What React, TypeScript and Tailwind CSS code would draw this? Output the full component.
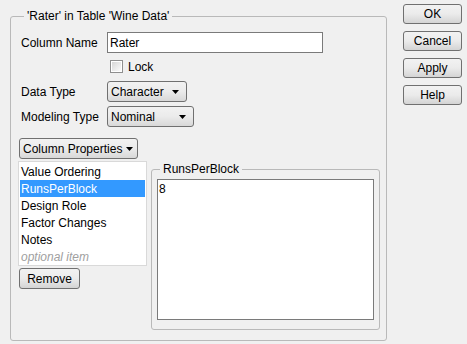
import React from "react";

const font = { fontFamily: '"Liberation Sans", Arial, sans-serif' };

function Caret() {
  return (
    <svg width="7" height="4" viewBox="0 0 7 4" className="shrink-0">
      <path d="M0 0 H7 L3.5 4 Z" fill="#000" />
    </svg>
  );
}

function WinButton({ label, className }: { label: string; className: string }) {
  return (
    <button
      className={
        "flex items-center justify-center whitespace-nowrap rounded-[3px] border border-[#707070] bg-linear-to-b from-[#f2f2f2] via-[#ebebeb] to-[#d4d4d4] text-[12px] leading-none text-black " +
        className
      }
    >
      {label}
    </button>
  );
}

function Dropdown({ label, width }: { label: string; width: string }) {
  return (
    <div
      className={
        "flex h-[21px] items-center justify-between whitespace-nowrap rounded-[3px] border border-[#707070] bg-linear-to-b from-[#f2f2f2] via-[#ebebeb] to-[#d8d8d8] pl-[3px] pr-[7px] text-[12px] text-black " +
        width
      }
    >
      <span>{label}</span>
      <Caret />
    </div>
  );
}

export default function App() {
  const items = ["Value Ordering", "RunsPerBlock", "Design Role", "Factor Changes", "Notes"];

  return (
    <div className="flex h-[344px] w-[467px] bg-[#f0f0f0] text-[12px] text-black" style={font}>
      <fieldset className="ml-[10px] mt-[8px] h-[333px] w-[377px] rounded-[3px] border border-[#b9b9b9] pl-[7px] pt-[8px]">
        <legend className="ml-[6px] whitespace-nowrap px-[3px] text-[12px] leading-[16px]">'Rater' in Table 'Wine Data'</legend>

        <div className="flex h-[21px] items-center">
          <span className="ml-[3px] w-[86px] whitespace-nowrap">Column Name</span>
          <div className="flex h-[21px] w-[216px] items-center border border-[#7a7a7a] bg-white pl-[2px]">Rater</div>
        </div>

        <div className="ml-[92px] mt-[7px] flex h-[13px] items-center gap-[5px] leading-none">
          <div className="h-[13px] w-[13px] border border-[#8f8f8f] bg-white p-px">
            <div className="h-full w-full bg-linear-to-br from-[#d6d6d6] to-[#fbfbfb]" />
          </div>
          <span>Lock</span>
        </div>

        <div className="mt-[8px] flex h-[21px] items-center">
          <span className="ml-[3px] w-[86px] whitespace-nowrap">Data Type</span>
          <Dropdown label="Character" width="w-[80px]" />
        </div>

        <div className="mt-[4px] flex h-[21px] items-center">
          <span className="ml-[3px] w-[86px] whitespace-nowrap">Modeling Type</span>
          <Dropdown label="Nominal" width="w-[87px]" />
        </div>

        <div className="ml-px mt-[11px] flex h-[21px] w-[119px] items-center justify-between whitespace-nowrap rounded-[3px] border border-[#707070] bg-linear-to-b from-[#f2f2f2] via-[#ebebeb] to-[#d8d8d8] pl-[3px] pr-[4px]">
          <span>Column Properties</span>
          <Caret />
        </div>

        <div className="mt-[2px] flex gap-[4px]">
          <div className="flex flex-col">
            <div className="h-[105px] w-[129px] border border-[#d9d9d9] bg-white p-px">
              {items.map((it) => (
                <div
                  key={it}
                  className={
                    "flex h-[17px] items-center whitespace-nowrap pl-px " +
                    (it === "RunsPerBlock" ? "bg-[#3399ff] text-white" : "")
                  }
                >
                  {it}
                </div>
              ))}
              <div className="flex h-[17px] items-center pl-px italic text-[#a0a0a0]">optional item</div>
            </div>
            <WinButton label="Remove" className="ml-px mt-[2px] h-[21px] w-[61px]" />
          </div>

          <fieldset className="h-[169px] w-[229px] rounded-[3px] border border-[#b9b9b9] pl-[5px] pt-[2px]">
            <legend className="ml-[3px] px-[3px] leading-[16px]">RunsPerBlock</legend>
            <div className="h-[141px] w-[217px] border border-[#7a7a7a] bg-white pl-[1px] pt-px leading-[16px]">8</div>
          </fieldset>
        </div>
      </fieldset>

      <div className="ml-[16px] mt-[4px] flex flex-col gap-[7px]">
        <WinButton label="OK" className="h-[20px] w-[59px]" />
        <WinButton label="Cancel" className="h-[20px] w-[59px]" />
        <WinButton label="Apply" className="h-[20px] w-[59px]" />
        <WinButton label="Help" className="h-[20px] w-[59px]" />
      </div>
    </div>
  );
}
